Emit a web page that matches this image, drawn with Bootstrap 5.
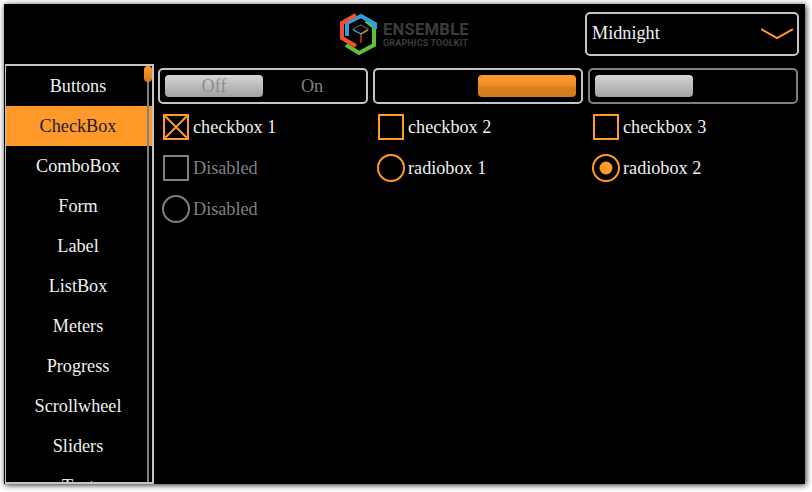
<!DOCTYPE html>
<html lang="en">
<head>
    <meta charset="UTF-8">
    <meta name="viewport" content="width=device-width, initial-scale=1">
    <title>Ensemble Graphics Toolkit</title>

    <link href="https://cdn.jsdelivr.net/npm/bootstrap@5.3.2/dist/css/bootstrap.min.css" rel="stylesheet">

    <style>
        html, body {
            height: 100%;
            overflow: hidden;
        }

        body {
            background-color: #fff;
            padding: 4px 0 0 4px;
            font-family: "Liberation Serif", "Times New Roman", serif;
            font-size: 18.2px;
            line-height: 1.2;
            color: #f0f0f0;
        }

        .app-window {
            width: 801px;
            height: 480px;
            background-color: #000;
            box-shadow: 1px 1px 6px rgba(0, 0, 0, .85);
        }

        /* Header */
        .app-header {
            height: 60px;
            padding: 8px 6px 5px 0;
        }

        .logo-box {
            margin-left: 333px;
            margin-top: -2px;
        }

        .logo-text {
            font-family: "Roboto", "Liberation Sans", sans-serif;
            font-weight: 700;
            color: #3c3c3c;
            margin-top: 2px;
        }

        .logo-big {
            font-size: 16.5px;
            letter-spacing: .3px;
            line-height: 17px;
        }

        .logo-small {
            font-size: 9px;
            letter-spacing: .15px;
            line-height: 10px;
        }

        .theme-select {
            width: 214px;
            height: 44px;
            border: 2px solid #c4c4c4;
            border-radius: 5px;
            padding: 0 4px 0 5px;
        }

        /* Left list */
        .side-list {
            width: 149px;
            margin-left: 1px;
            border: solid #c4c4c4;
            border-width: 2px 2px 2px 1px;
            overflow: hidden;
        }

        .side-item {
            height: 40px;
            flex-shrink: 0;
            padding-right: 2px;
            padding-top: 2px;
        }

        .side-item.is-active {
            background-color: #ff9a2a;
            color: #1c1c1c;
        }

        .scroll-track {
            top: 0;
            bottom: 0;
            right: 3px;
            width: 2px;
            background-color: #808080;
        }

        .scroll-thumb {
            top: 0;
            right: 0;
            width: 8px;
            height: 16px;
            border-radius: 4px;
            background: linear-gradient(#ff9a2a, #cf7b1e);
        }

        /* Right side */
        .demo-grid {
            display: grid;
            grid-template-columns: repeat(3, 210px);
            grid-auto-rows: 41px;
            column-gap: 5px;
            padding: 4px 0 0 4px;
        }

        .toggle-box {
            height: 36px;
            border: 2px solid #c4c4c4;
            border-radius: 5px;
            padding: 5px;
            color: #808080;
        }

        .toggle-box.is-off {
            border-color: #808080;
        }

        .toggle-side {
            width: 98px;
            height: 22px;
            padding-top: 2px;
            border-radius: 4px;
        }

        .thumb-gray {
            background: linear-gradient(#d6d6d6, #a2a2a2);
            color: #8c8c8c;
        }

        .thumb-orange {
            background: linear-gradient(#fc982a, #ec8e26 48%, #d88022 54%, #d07c1e);
        }

        .toggle-push {
            margin-left: 98px;
        }

        .check-row {
            height: 41px;
            padding-left: 4px;
            padding-top: 4px;
        }

        .mark-slot {
            width: 28px;
            height: 28px;
            margin-right: 3px;
            flex-shrink: 0;
        }

        .mark-label {
            margin-top: 4px;
        }

        .is-disabled {
            color: #808080;
        }
    </style>
</head>

<body>

<div class="app-window d-flex flex-column">
    <div class="app-header d-flex align-items-start flex-shrink-0">
        <div class="logo-box d-flex align-items-center">
            <svg width="46" height="46" viewBox="0 0 46 46" fill="none" stroke-width="4">
                <path d="M29 11 37 17V35L22 43 9 35" stroke="#5fbf3a"/>
                <path d="M10 26V13L24 6 38 14V19" stroke="#2d9fe0"/>
                <path d="M19 5 5 13V28L19 36" stroke="#f0512a"/>
                <path d="M16 19 24 15 31 19 24 24Z" stroke="#555" stroke-width="1.2"/>
                <path d="M24 24 16 20" stroke="#2d9fe0" stroke-width="1.2"/>
                <path d="M24 24 31 20" stroke="#e8a020" stroke-width="1.2"/>
                <path d="M24 24V33" stroke="#f0512a" stroke-width="1.2"/>
            </svg>
            <div class="logo-text">
                <div class="logo-big">ENSEMBLE</div>
                <div class="logo-small">GRAPHICS TOOLKIT</div>
            </div>
        </div>
        <div class="theme-select d-flex align-items-center justify-content-between ms-auto">
            <span>Midnight</span>
            <svg width="32" height="12" viewBox="0 0 32 12" fill="none">
                <path d="M0 1 16 10 32 1" stroke="#ff9a2a" stroke-width="2"/>
            </svg>
        </div>
    </div>

    <div class="d-flex flex-grow-1" style="min-height:0">
        <div class="side-list position-relative d-flex flex-column">
            <div class="side-item d-flex align-items-center justify-content-center">Buttons</div>
            <div class="side-item is-active d-flex align-items-center justify-content-center">CheckBox</div>
            <div class="side-item d-flex align-items-center justify-content-center">ComboBox</div>
            <div class="side-item d-flex align-items-center justify-content-center">Form</div>
            <div class="side-item d-flex align-items-center justify-content-center">Label</div>
            <div class="side-item d-flex align-items-center justify-content-center">ListBox</div>
            <div class="side-item d-flex align-items-center justify-content-center">Meters</div>
            <div class="side-item d-flex align-items-center justify-content-center">Progress</div>
            <div class="side-item d-flex align-items-center justify-content-center">Scrollwheel</div>
            <div class="side-item d-flex align-items-center justify-content-center">Sliders</div>
            <div class="side-item d-flex align-items-center justify-content-center">Text</div>
            <div class="scroll-track position-absolute"></div>
            <div class="scroll-thumb position-absolute"></div>
        </div>

        <div class="demo-grid flex-grow-1 align-content-start">
            <div>
                <div class="toggle-box d-flex">
                    <div class="toggle-side thumb-gray d-flex align-items-center justify-content-center">Off</div>
                    <div class="toggle-side d-flex align-items-center justify-content-center">On</div>
                </div>
            </div>
            <div>
                <div class="toggle-box d-flex">
                    <div class="toggle-side thumb-orange toggle-push"></div>
                </div>
            </div>
            <div>
                <div class="toggle-box is-off d-flex">
                    <div class="toggle-side thumb-gray"></div>
                </div>
            </div>

            <div class="check-row d-flex align-items-start">
                <div class="mark-slot d-flex align-items-center justify-content-center">
                    <svg width="26" height="26" viewBox="0 0 26 26" fill="none" stroke="#ff9a2a" stroke-width="2">
                        <rect x="1" y="1" width="24" height="24"/>
                        <path d="M1 1 25 25M25 1 1 25"/>
                    </svg>
                </div>
                <span class="mark-label">checkbox 1</span>
            </div>
            <div class="check-row d-flex align-items-start">
                <div class="mark-slot d-flex align-items-center justify-content-center">
                    <svg width="26" height="26" viewBox="0 0 26 26" fill="none" stroke="#ff9a2a" stroke-width="2">
                        <rect x="1" y="1" width="24" height="24"/>
                    </svg>
                </div>
                <span class="mark-label">checkbox 2</span>
            </div>
            <div class="check-row d-flex align-items-start">
                <div class="mark-slot d-flex align-items-center justify-content-center">
                    <svg width="26" height="26" viewBox="0 0 26 26" fill="none" stroke="#ff9a2a" stroke-width="2">
                        <rect x="1" y="1" width="24" height="24"/>
                    </svg>
                </div>
                <span class="mark-label">checkbox 3</span>
            </div>

            <div class="check-row d-flex align-items-start">
                <div class="mark-slot d-flex align-items-center justify-content-center">
                    <svg width="26" height="26" viewBox="0 0 26 26" fill="none" stroke="#808080" stroke-width="2">
                        <rect x="1" y="1" width="24" height="24"/>
                    </svg>
                </div>
                <span class="mark-label is-disabled">Disabled</span>
            </div>
            <div class="check-row d-flex align-items-start">
                <div class="mark-slot">
                    <svg width="28" height="28" viewBox="0 0 28 28" fill="none" stroke="#ff9a2a" stroke-width="2">
                        <circle cx="14" cy="14" r="13"/>
                    </svg>
                </div>
                <span class="mark-label">radiobox 1</span>
            </div>
            <div class="check-row d-flex align-items-start">
                <div class="mark-slot">
                    <svg width="28" height="28" viewBox="0 0 28 28" fill="none" stroke="#ff9a2a" stroke-width="2">
                        <circle cx="14" cy="14" r="13"/>
                        <circle cx="14" cy="14" r="6.5" fill="#ff9a2a" stroke="none"/>
                    </svg>
                </div>
                <span class="mark-label">radiobox 2</span>
            </div>

            <div class="check-row d-flex align-items-start">
                <div class="mark-slot">
                    <svg width="28" height="28" viewBox="0 0 28 28" fill="none" stroke="#808080" stroke-width="2">
                        <circle cx="14" cy="14" r="13"/>
                    </svg>
                </div>
                <span class="mark-label is-disabled">Disabled</span>
            </div>
        </div>
    </div>
</div>

<script src="https://cdn.jsdelivr.net/npm/bootstrap@5.3.2/dist/js/bootstrap.bundle.min.js"></script>

</body>
</html>
